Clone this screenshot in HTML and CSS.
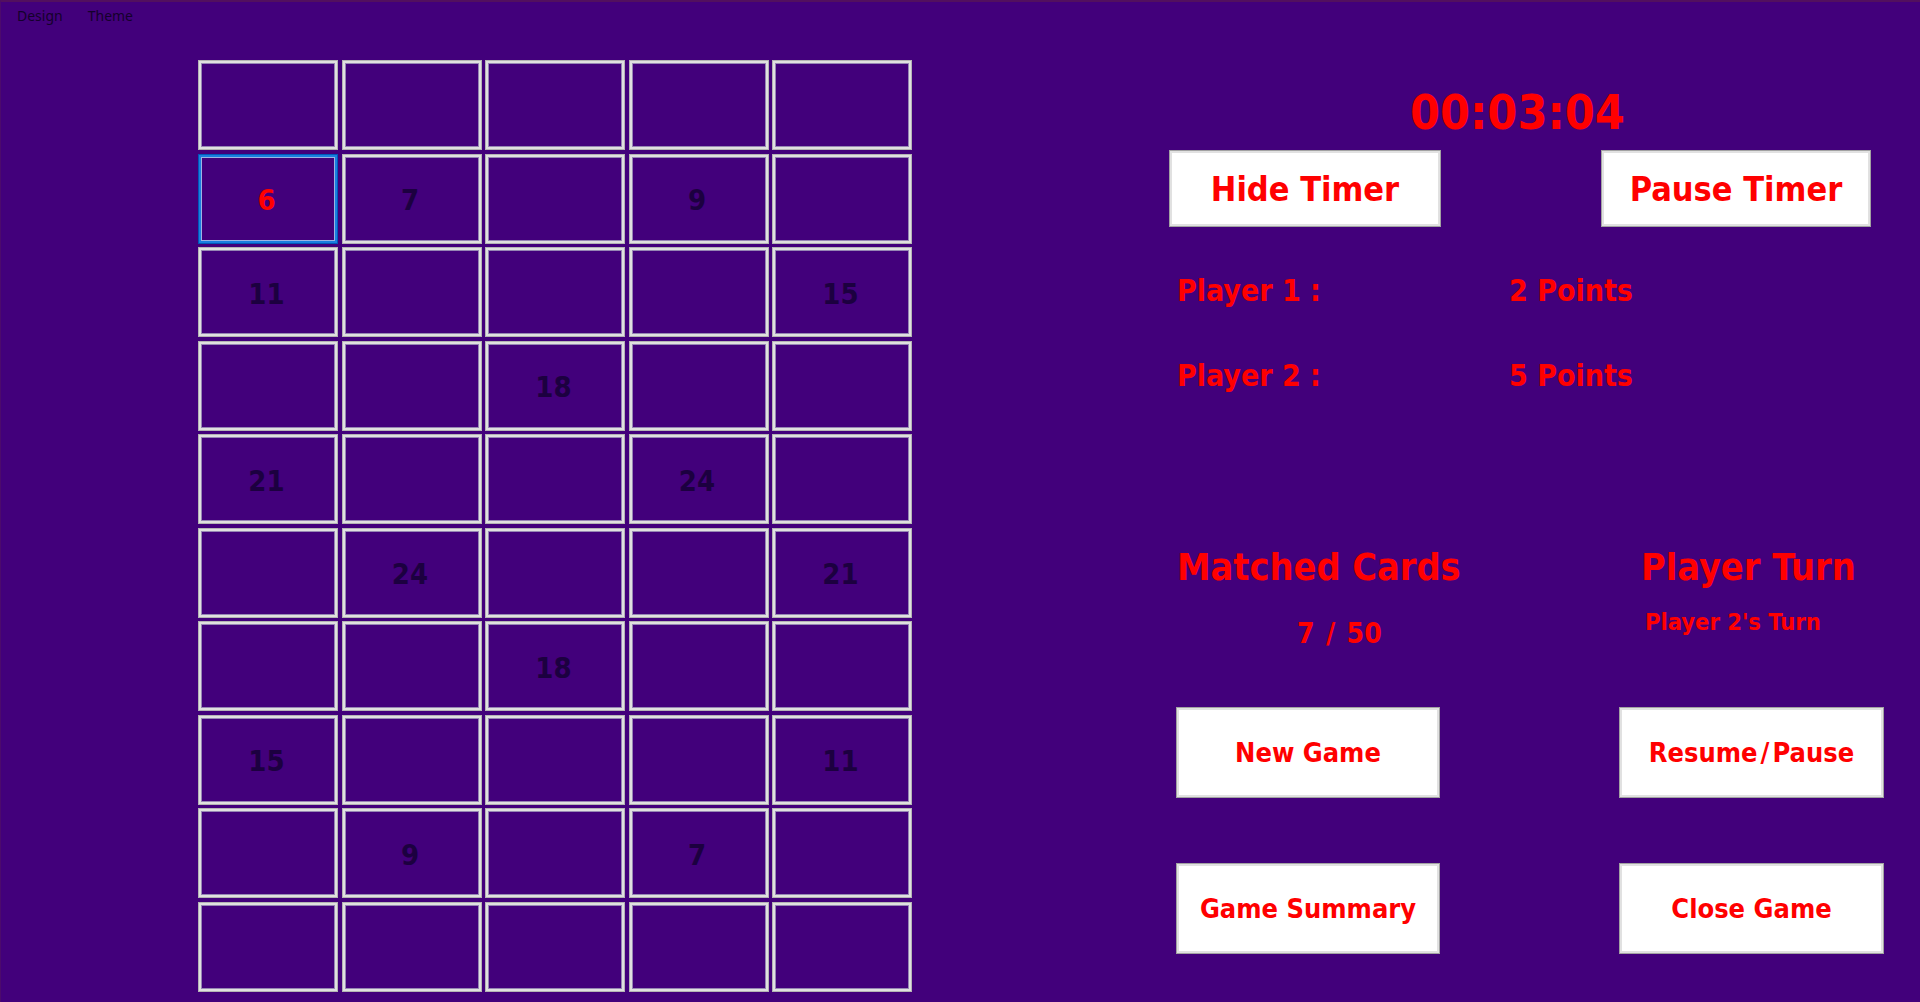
FILE: index.html
```html
<!DOCTYPE html>
<html lang="en">
<head>
<meta charset="utf-8">
<title>Memory Game</title>
<link rel="stylesheet" href="styles.css">
</head>
<body>
<div class="window">
  <nav class="menubar">
    <span class="menu-item">Design</span>
    <span class="menu-item">Theme</span>
  </nav>
  <main class="main">
    <section class="board">
      <div class="cell"></div><div class="cell"></div><div class="cell"></div><div class="cell"></div><div class="cell"></div>
      <div class="cell selected"><span class="num red">6</span></div><div class="cell"><span class="num">7</span></div><div class="cell"></div><div class="cell"><span class="num">9</span></div><div class="cell"></div>
      <div class="cell"><span class="num">11</span></div><div class="cell"></div><div class="cell"></div><div class="cell"></div><div class="cell"><span class="num">15</span></div>
      <div class="cell"></div><div class="cell"></div><div class="cell"><span class="num">18</span></div><div class="cell"></div><div class="cell"></div>
      <div class="cell"><span class="num">21</span></div><div class="cell"></div><div class="cell"></div><div class="cell"><span class="num">24</span></div><div class="cell"></div>
      <div class="cell"></div><div class="cell"><span class="num">24</span></div><div class="cell"></div><div class="cell"></div><div class="cell"><span class="num">21</span></div>
      <div class="cell"></div><div class="cell"></div><div class="cell"><span class="num">18</span></div><div class="cell"></div><div class="cell"></div>
      <div class="cell"><span class="num">15</span></div><div class="cell"></div><div class="cell"></div><div class="cell"></div><div class="cell"><span class="num">11</span></div>
      <div class="cell"></div><div class="cell"><span class="num">9</span></div><div class="cell"></div><div class="cell"><span class="num">7</span></div><div class="cell"></div>
      <div class="cell"></div><div class="cell"></div><div class="cell"></div><div class="cell"></div><div class="cell"></div>
    </section>
    <aside class="panel">
      <div class="timer">00:03:04</div>
      <div class="timer-buttons">
        <button class="btn btn-timer hide-btn">Hide Timer</button>
        <button class="btn btn-timer pause-btn">Pause Timer</button>
      </div>
      <div class="player-row first">
        <span class="player-label">Player 1 :</span>
        <span class="player-score">2 Points</span>
      </div>
      <div class="player-row second">
        <span class="player-label">Player 2 :</span>
        <span class="player-score">5 Points</span>
      </div>
      <div class="heads">
        <span class="head matched">Matched Cards</span>
        <span class="head turn">Player Turn</span>
      </div>
      <div class="subs">
        <span class="matched-count">7 / 50</span>
        <span class="turn-text">Player 2's Turn</span>
      </div>
      <div class="action-row row1">
        <button class="btn btn-action left">New Game</button>
        <button class="btn btn-action right">Resume<span class="slash">/</span>Pause</button>
      </div>
      <div class="action-row row2">
        <button class="btn btn-action left">Game Summary</button>
        <button class="btn btn-action right">Close Game</button>
      </div>
    </aside>
  </main>
</div>
</body>
</html>
```
FILE: styles.css
```css
* { box-sizing: border-box; }

html, body {
  margin: 0;
  padding: 0;
  width: 1920px;
  height: 1002px;
  overflow: hidden;
  background: #42007b;
}

.window {
  width: 1920px;
  height: 1002px;
  background: #42007b;
  border-top: 2px solid #52105e;
  border-left: 1px solid #4c0a6c;
}

.menubar {
  height: 28px;
  display: flex;
  align-items: center;
  padding-left: 16px;
  gap: 25px;
  font-family: "Noto Sans", "DejaVu Sans", sans-serif;
  font-size: 14px;
  color: #14002c;
}

.menu-item { line-height: 20px; }

.main {
  display: flex;
  align-items: flex-start;
}

.board {
  margin-top: 30px;
  margin-left: 197px;
  display: grid;
  grid-template-columns: repeat(5, 140px);
  grid-template-rows: repeat(10, 90px);
  column-gap: 3.5px;
  row-gap: 3.5px;
}

.cell {
  background: #42007b;
  border: 1px solid #b4b4b4;
  box-shadow: inset 0 0 0 2px #e0e0e0, inset 0 0 0 3px #9686b4;
  display: flex;
  align-items: center;
  justify-content: center;
}

.cell.selected {
  border-color: #0058b8;
  box-shadow: inset 0 0 0 2px #1a7ee0, inset 0 0 0 3px #9cb4e4;
}

.num {
  font-family: "DejaVu Sans Condensed", "DejaVu Sans", sans-serif;
  font-stretch: condensed;
  font-weight: bold;
  font-size: 29px;
  line-height: 1;
  color: #1c0040;
  margin-top: 4px;
  margin-right: 3px;
}

.num.red { color: #ff0000; }

.panel {
  margin-left: 257px;
  margin-top: 58px;
  width: 720px;
  font-family: "DejaVu Sans Condensed", "DejaVu Sans", sans-serif;
  font-stretch: condensed;
  font-weight: bold;
  color: #ff0000;
}

.timer {
  font-size: 48px;
  line-height: 48px;
  padding-left: 241px;
}

.timer-buttons {
  margin-top: 14px;
  display: flex;
  gap: 160px;
}

.btn {
  font-family: "DejaVu Sans Condensed", "DejaVu Sans", sans-serif;
  font-stretch: condensed;
  font-weight: bold;
  color: #ff0000;
  background: #ffffff;
  border: 1px solid #a2a2a2;
  box-shadow: inset 0 0 0 2px #e1e1e1;
  padding: 0;
  margin: 0;
  display: flex;
  align-items: center;
  justify-content: center;
}

.btn-timer {
  height: 77px;
  font-size: 34px;
}

.hide-btn { width: 272px; }
.pause-btn { width: 270px; }

.player-row {
  display: flex;
  font-size: 30px;
  line-height: 30px;
  padding-left: 8px;
}

.player-row.first { margin-top: 49px; }
.player-row.second { margin-top: 55px; }

.player-label { width: 332px; }

.heads {
  display: flex;
  margin-top: 157px;
  padding-left: 8px;
  font-size: 37.5px;
  line-height: 38px;
}

.head.matched { width: 464px; }

.subs {
  display: flex;
  align-items: flex-start;
  padding-left: 128px;
  height: 60px;
}

.matched-count {
  width: 348px;
  font-size: 28px;
  line-height: 28px;
  margin-top: 34px;
  word-spacing: 2px;
  letter-spacing: 0.3px;
}

.turn-text {
  font-size: 23.5px;
  line-height: 24px;
  margin-top: 24px;
}

.action-row {
  display: flex;
  gap: 179px;
  padding-left: 7px;
}

.action-row.row1 { margin-top: 61px; }
.action-row.row2 { margin-top: 65px; }

.btn-action {
  width: 264px;
  height: 91px;
  font-size: 27px;
}

.btn-action.right { width: 265px; }

.slash { margin: 0 3px; }
```
